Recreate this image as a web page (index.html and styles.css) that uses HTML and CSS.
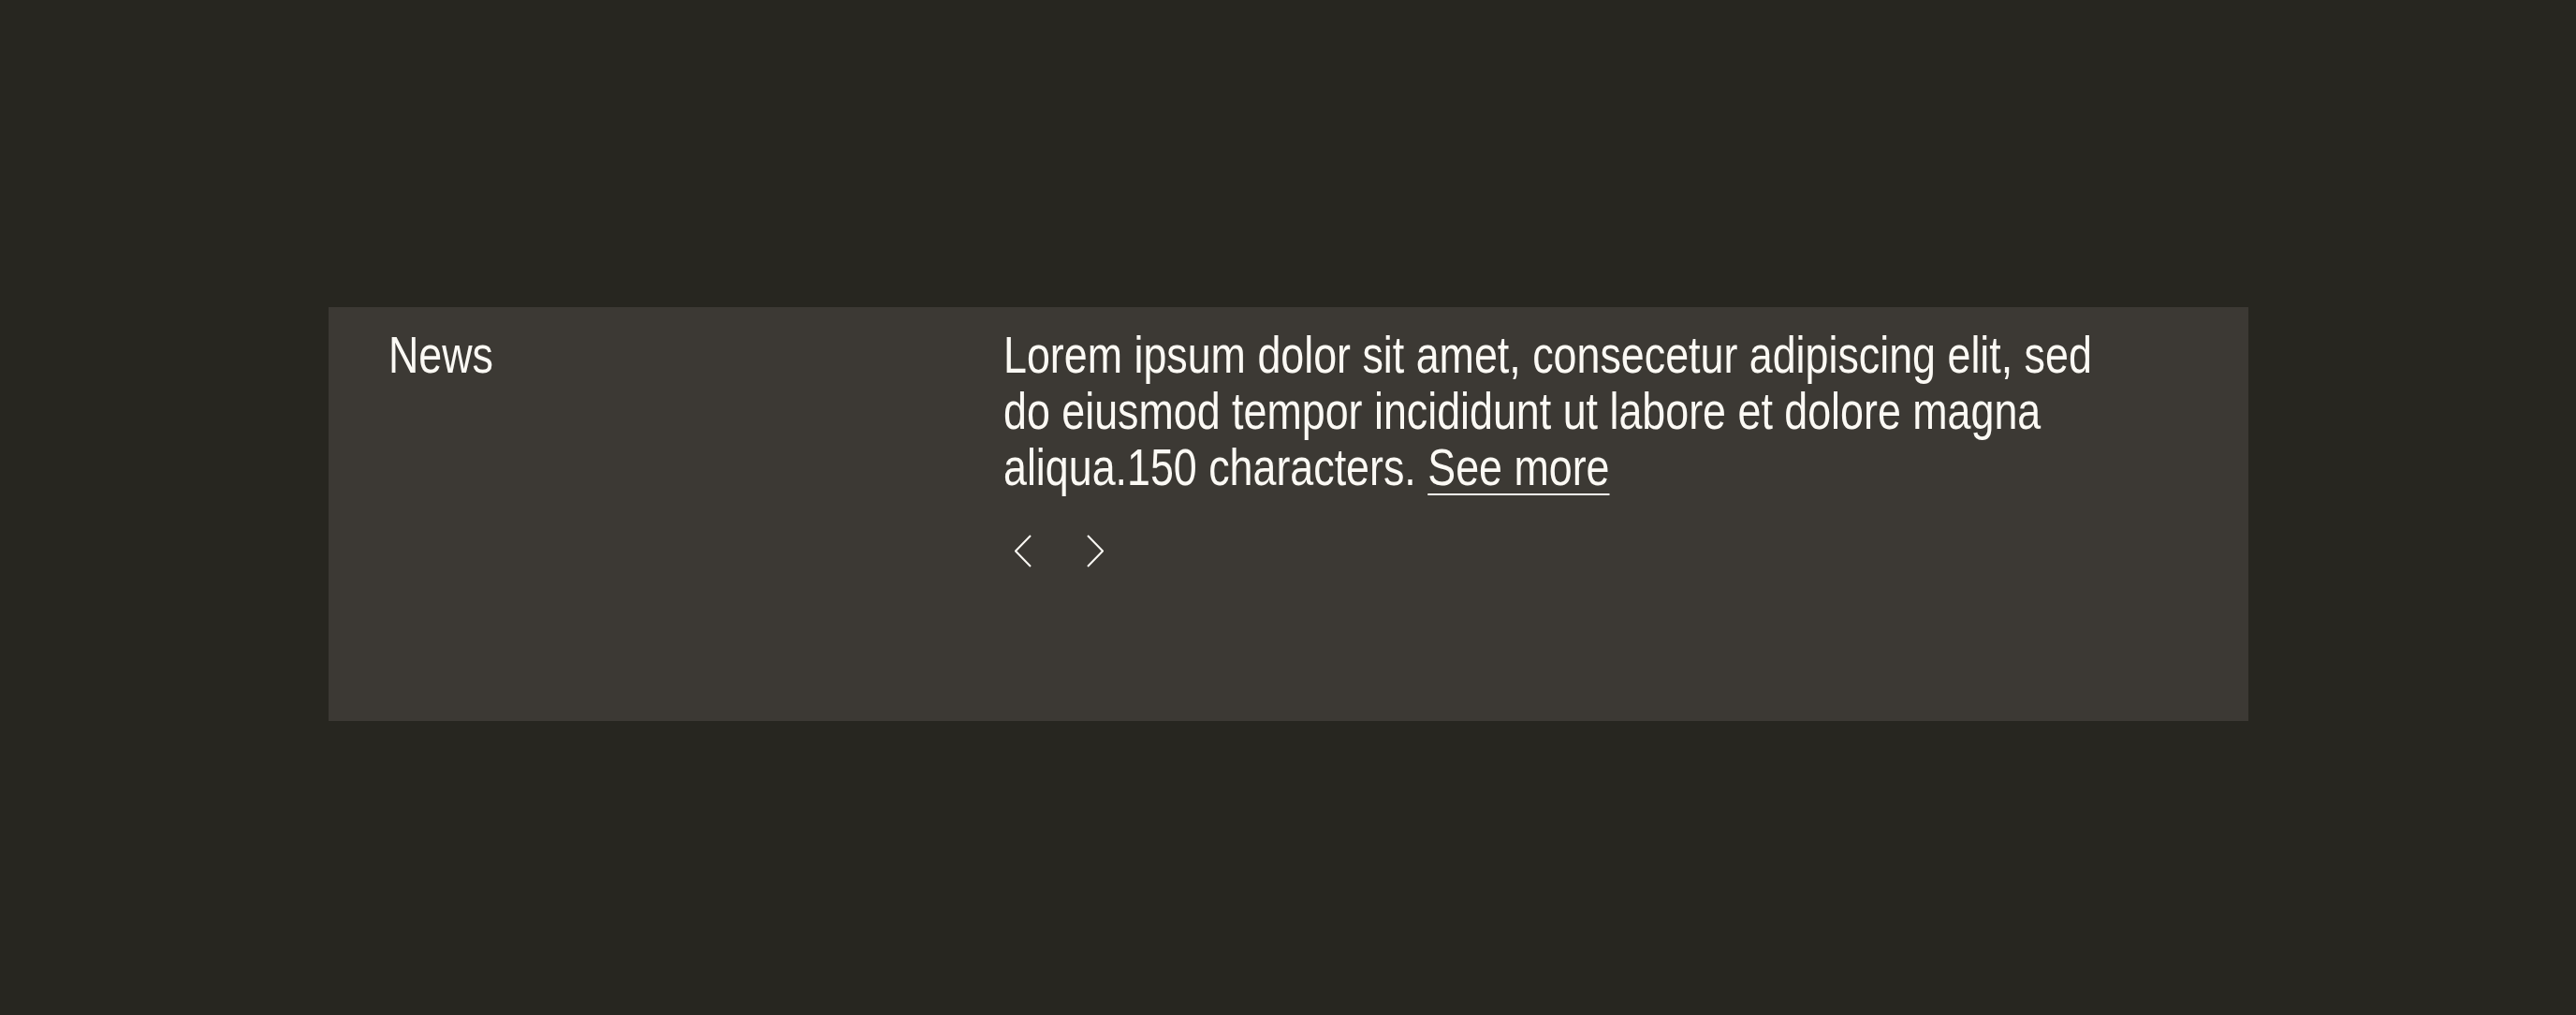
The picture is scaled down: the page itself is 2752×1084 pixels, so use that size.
FILE: index.html
```html
<!DOCTYPE html>
<html lang="en">
<head>
  <meta charset="UTF-8">
  <title>News</title>
  <link rel="stylesheet" href="styles.css">
</head>
<body>
<div class="page">
  <section class="news">
    <h2 class="news-title"><span class="cond">News</span></h2>
    <div class="news-body">
      <p class="news-text cond">Lorem ipsum dolor sit amet, consecetur adipiscing elit, sed do eiusmod tempor incididunt ut labore et dolore magna aliqua.150 characters. <a href="#">See more</a></p>
      <div class="news-nav">
        <button class="nav-btn" aria-label="Previous">
          <svg width="18" height="35" viewBox="0 0 18 35"><polyline points="17,1 1,17.5 17,34" /></svg>
        </button>
        <button class="nav-btn" aria-label="Next">
          <svg width="18" height="35" viewBox="0 0 18 35"><polyline points="1,1 17,17.5 1,34" /></svg>
        </button>
      </div>
    </div>
  </section>
</div>
</body>
</html>
```

FILE: styles.css
```css
body { margin: 0; background: #272620; font-family: "Liberation Sans", Arial, sans-serif; color: #fbf9f4; }
.page { padding-top: 328px; }
.news { width: 2051px; min-height: 442px; margin: 0 auto; background: #3c3934; box-sizing: border-box; padding: 21px 64px; display: grid; grid-template-columns: 657px 1fr; }
.news-title { margin: 0; font-size: 56px; line-height: 60px; font-weight: normal; }
/* no condensed face installed, so squeeze the regular one */
.cond { display: inline-block; transform-origin: 0 0; transform: scaleX(0.8); }
.news-body { min-width: 0; }
.news-text { margin: 0; width: 1490px; font-size: 56px; line-height: 60px; }
.news-text a { color: inherit; text-decoration: underline; text-decoration-thickness: 2px; text-underline-offset: 9px; }
.news-nav { display: flex; gap: 34px; margin-top: 31px; }
.nav-btn { width: 43px; height: 56px; padding: 0; border: none; background: none; display: flex; align-items: center; justify-content: center; cursor: pointer; }
.nav-btn polyline { fill: none; stroke: #fbf9f4; stroke-width: 2; }
```
